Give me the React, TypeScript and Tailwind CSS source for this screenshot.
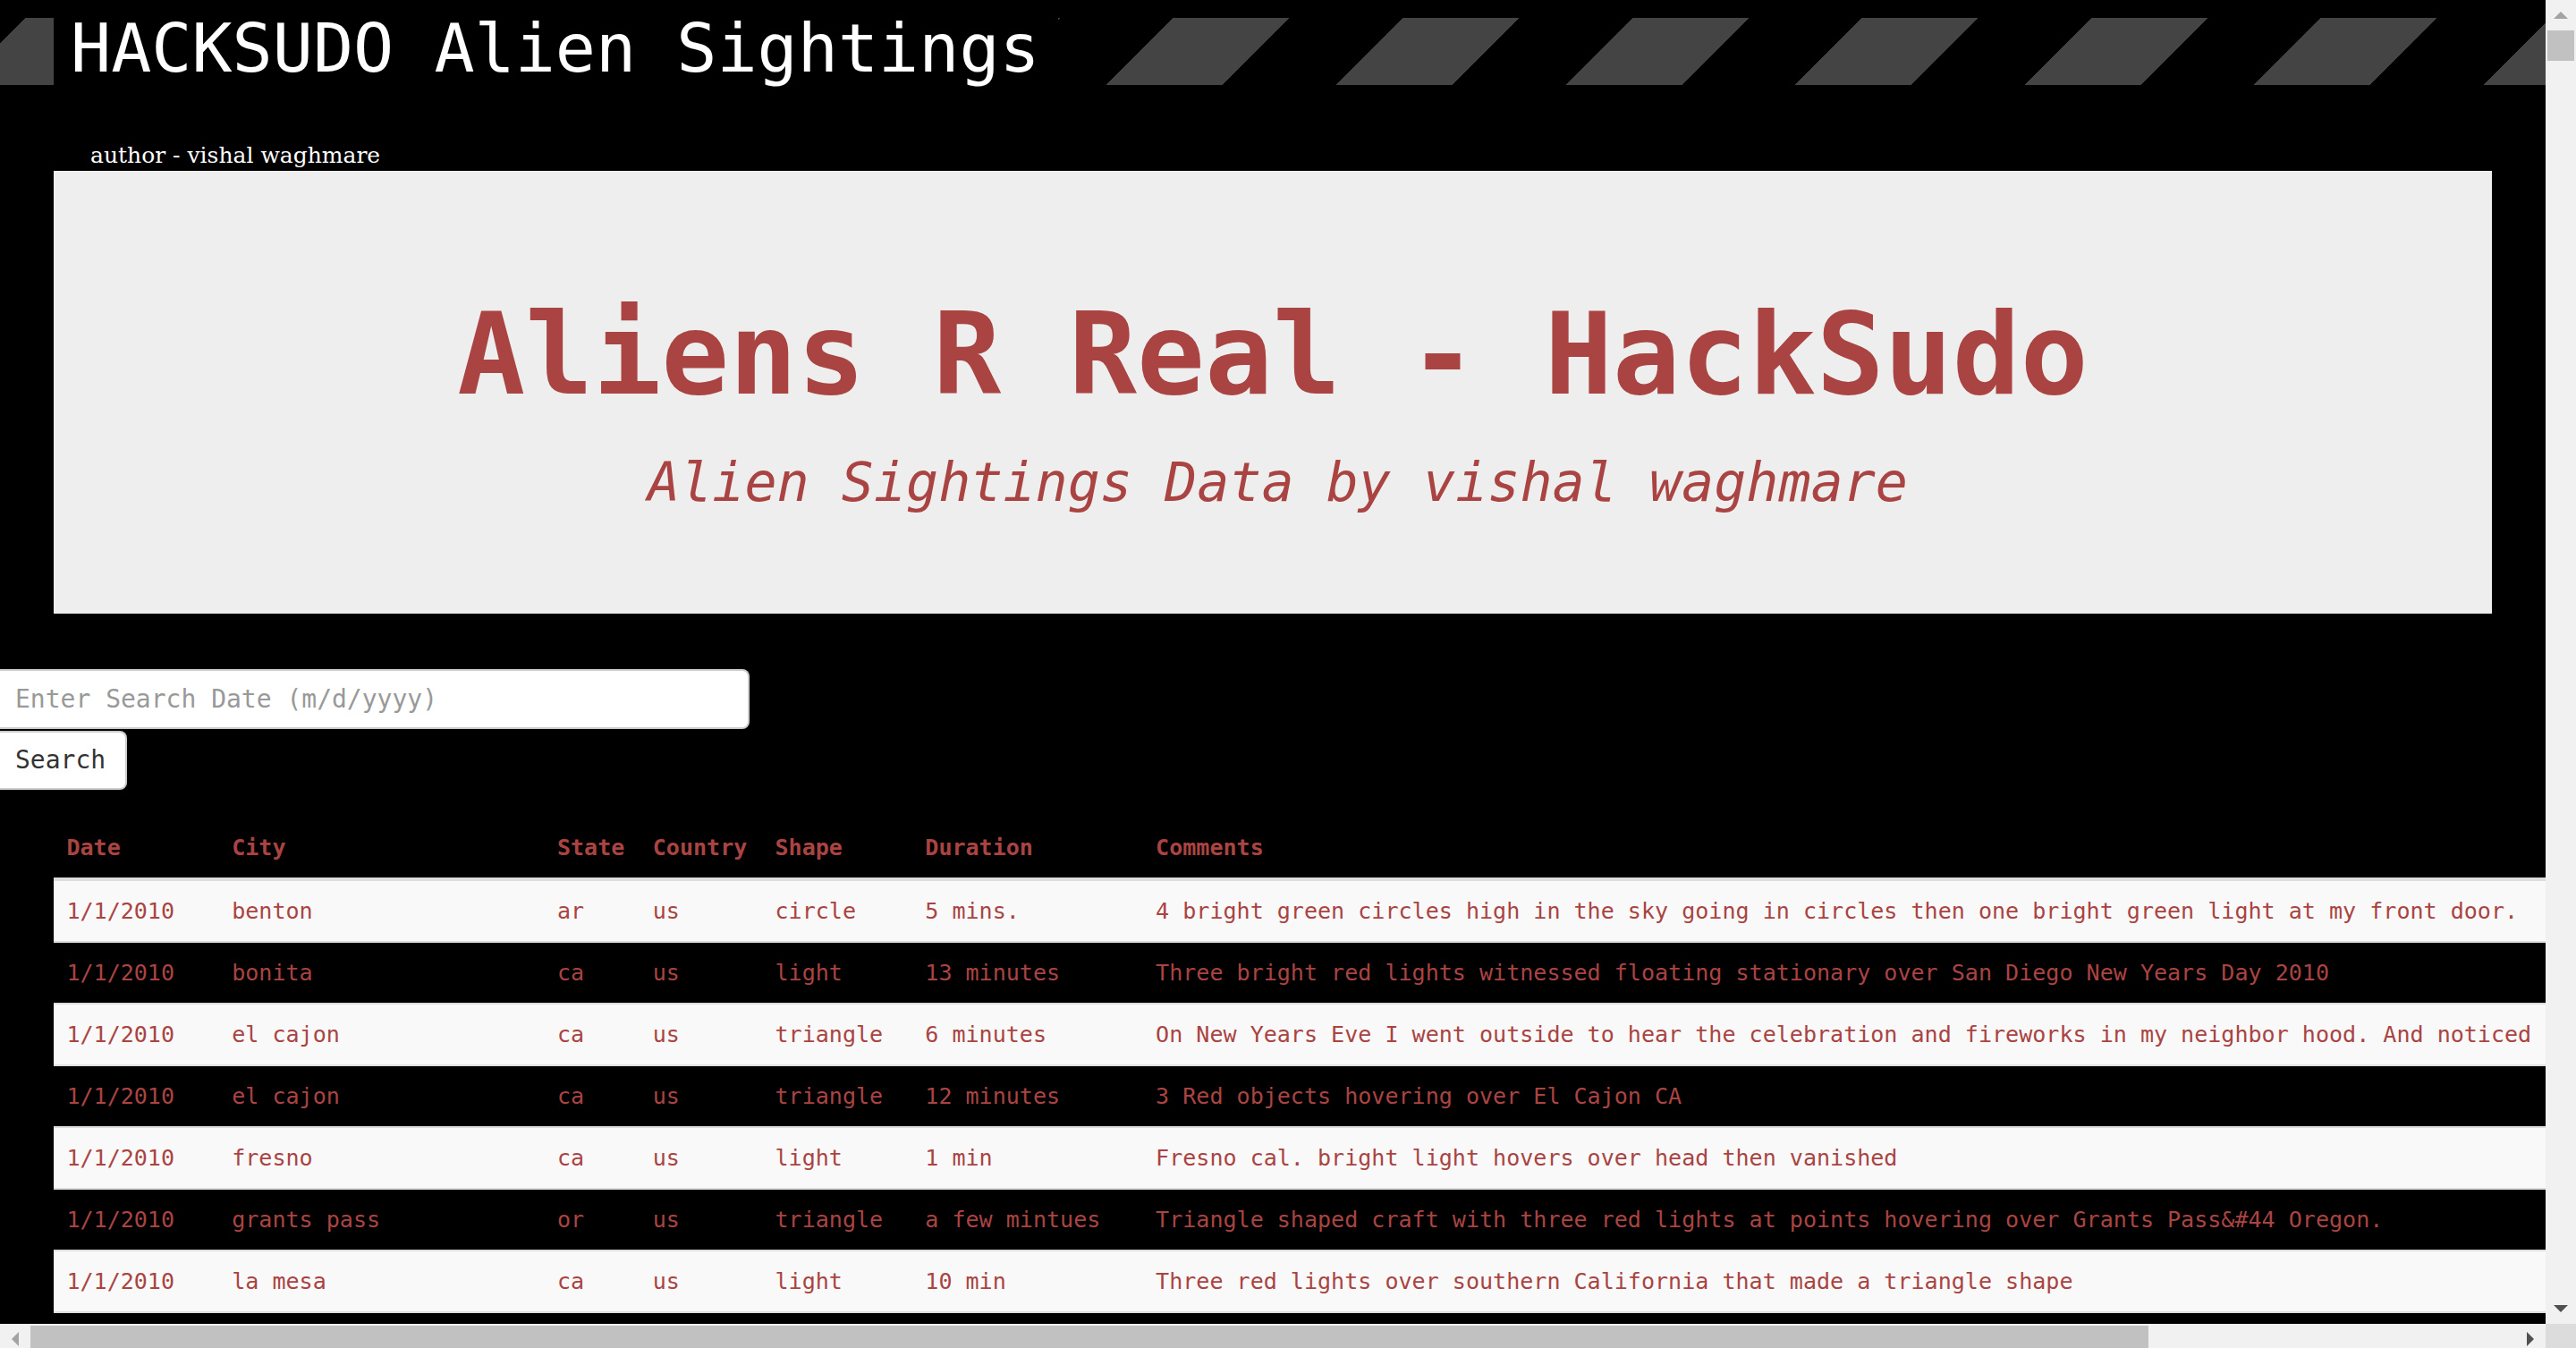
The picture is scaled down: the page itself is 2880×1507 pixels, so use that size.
import React from "react";

type Sighting = {
  date: string;
  city: string;
  state: string;
  country: string;
  shape: string;
  duration: string;
  comments: string;
};

const sightings: Sighting[] = [
  {
    date: "1/1/2010",
    city: "benton",
    state: "ar",
    country: "us",
    shape: "circle",
    duration: "5 mins.",
    comments:
      "4 bright green circles high in the sky going in circles then one bright green light at my front door.",
  },
  {
    date: "1/1/2010",
    city: "bonita",
    state: "ca",
    country: "us",
    shape: "light",
    duration: "13 minutes",
    comments: "Three bright red lights witnessed floating stationary over San Diego New Years Day 2010",
  },
  {
    date: "1/1/2010",
    city: "el cajon",
    state: "ca",
    country: "us",
    shape: "triangle",
    duration: "6 minutes",
    comments:
      "On New Years Eve I went outside to hear the celebration and fireworks in my neighbor hood. And noticed in the sky three red lights moving slowly.",
  },
  {
    date: "1/1/2010",
    city: "el cajon",
    state: "ca",
    country: "us",
    shape: "triangle",
    duration: "12 minutes",
    comments: "3 Red objects hovering over El Cajon CA",
  },
  {
    date: "1/1/2010",
    city: "fresno",
    state: "ca",
    country: "us",
    shape: "light",
    duration: "1 min",
    comments: "Fresno cal. bright light hovers over head then vanished",
  },
  {
    date: "1/1/2010",
    city: "grants pass",
    state: "or",
    country: "us",
    shape: "triangle",
    duration: "a few mintues",
    comments: "Triangle shaped craft with three red lights at points hovering over Grants Pass&#44 Oregon.",
  },
  {
    date: "1/1/2010",
    city: "la mesa",
    state: "ca",
    country: "us",
    shape: "light",
    duration: "10 min",
    comments: "Three red lights over southern California that made a triangle shape",
  },
  {
    date: "1/1/2010",
    city: "lancaster",
    state: "ca",
    country: "us",
    shape: "light",
    duration: "5 minutes",
    comments: "Red lights over the desert",
  },
];

// inner widths keep the columns where the reference has them
const columns = [
  { label: "Date", w: "w-[156px]" },
  { label: "City", w: "w-[335px]" },
  { label: "State", w: "w-[78px]" },
  { label: "Country", w: "w-[108px]" },
  { label: "Shape", w: "w-[139px]" },
  { label: "Duration", w: "w-[229px]" },
  { label: "Comments", w: "" },
];

function Arrow({ dir, color }: { dir: "up" | "down" | "left" | "right"; color: string }) {
  const vertical = dir === "up" || dir === "down";
  const points = {
    up: "0,8 8,0 16,8",
    down: "0,0 16,0 8,8",
    left: "8,0 8,16 0,8",
    right: "0,0 8,8 0,16",
  }[dir];
  return (
    <svg width={vertical ? 16 : 8} height={vertical ? 8 : 16} viewBox={vertical ? "0 0 16 8" : "0 0 8 16"}>
      <polygon points={points} fill={color} />
    </svg>
  );
}

function VerticalScrollbar() {
  return (
    <div className="flex w-[34px] shrink-0 flex-col bg-[#f1f1f1]">
      <div className="flex h-[34px] items-center justify-center">
        <Arrow dir="up" color="#a3a3a3" />
      </div>
      <div className="mx-[2px] h-[34px] bg-[#c1c1c1]" />
      <div className="flex-1" />
      <div className="flex h-[34px] items-center justify-center">
        <Arrow dir="down" color="#505050" />
      </div>
    </div>
  );
}

function HorizontalScrollbar() {
  return (
    <div className="flex h-[34px] shrink-0 bg-[#f1f1f1]">
      <div className="flex w-[34px] items-center justify-center">
        <Arrow dir="left" color="#a3a3a3" />
      </div>
      <div className="my-[2px] w-[2368px] bg-[#c1c1c1]" />
      <div className="flex-1" />
      <div className="flex w-[34px] items-center justify-center">
        <Arrow dir="right" color="#505050" />
      </div>
      <div className="w-[34px] bg-[#dcdcdc]" />
    </div>
  );
}

export default function App() {
  return (
    <div className="flex h-screen w-screen flex-col overflow-hidden bg-black">
      <div className="flex h-[1480px] shrink-0">
        <main className="min-w-0 flex-1 overflow-hidden font-['DejaVu_Sans_Mono',monospace]">
          {/* striped header band */}
          <div className="mt-[20px] h-[75px] bg-[repeating-linear-gradient(135deg,transparent_0px,transparent_20.5px,#444_20.5px,#444_112.4px,transparent_112.4px,transparent_181.44px)]">
            <h1 className="ml-[60px] h-[75px] w-[1123px] bg-black pl-[19px] text-[75px] leading-[68px] whitespace-nowrap text-white">
              HACKSUDO Alien Sightings
            </h1>
          </div>

          <div className="h-[96px] pl-[101px] pt-[65.5px] font-['DejaVu_Serif',serif] text-[25px] leading-[25px] text-white">
            author - vishal waghmare
          </div>

          {/* jumbotron */}
          <div className="mx-[60px] bg-[#eee] pt-[136px] pb-[105px] text-center text-[#a94442]">
            <h1 className="text-[126.2px] font-bold leading-[140px]">Aliens R Real - HackSudo</h1>
            <p className="mt-[29.5px] pl-[11px] text-[60px] italic leading-[84px]">
              Alien Sightings Data by vishal waghmare
            </p>
          </div>

          {/* search */}
          <div className="mt-[62px]">
            <input
              type="text"
              placeholder="Enter Search Date (m/d/yyyy)"
              className="block h-[67px] w-[838px] rounded-r-[8px] border-2 border-l-0 border-[#ccc] bg-white pl-[17px] text-[28px] text-[#555] outline-none placeholder:text-[#999]"
            />
            <button className="mt-[2px] block h-[66px] w-[142px] rounded-r-[8px] border-2 border-l-0 border-[#ccc] bg-white pl-[17px] text-left text-[28px] text-[#333]">
              Search
            </button>
          </div>

          {/* data table */}
          <div className="mt-[31px] ml-[60px]">
            <table className="border-separate border-spacing-0 whitespace-nowrap text-left text-[25.05px] leading-[37px] text-[#a94442]">
              <thead>
                <tr>
                  {columns.map((c) => (
                    <th key={c.label} className="border-b-2 border-[#ddd] px-[14.4px] py-[15px] font-bold">
                      <div className={c.w}>{c.label}</div>
                    </th>
                  ))}
                </tr>
              </thead>
              <tbody>
                {sightings.map((s, i) => (
                  <tr key={i} className={i % 2 === 0 ? "bg-[#f9f9f9]" : ""}>
                    <td className="border-t-2 border-[#ddd] px-[14.4px] py-[15px]">{s.date}</td>
                    <td className="border-t-2 border-[#ddd] px-[14.4px] py-[15px]">{s.city}</td>
                    <td className="border-t-2 border-[#ddd] px-[14.4px] py-[15px]">{s.state}</td>
                    <td className="border-t-2 border-[#ddd] px-[14.4px] py-[15px]">{s.country}</td>
                    <td className="border-t-2 border-[#ddd] px-[14.4px] py-[15px]">{s.shape}</td>
                    <td className="border-t-2 border-[#ddd] px-[14.4px] py-[15px]">{s.duration}</td>
                    <td className="border-t-2 border-[#ddd] px-[14.4px] py-[15px]">{s.comments}</td>
                  </tr>
                ))}
              </tbody>
            </table>
          </div>
        </main>
        <VerticalScrollbar />
      </div>
      <HorizontalScrollbar />
    </div>
  );
}
